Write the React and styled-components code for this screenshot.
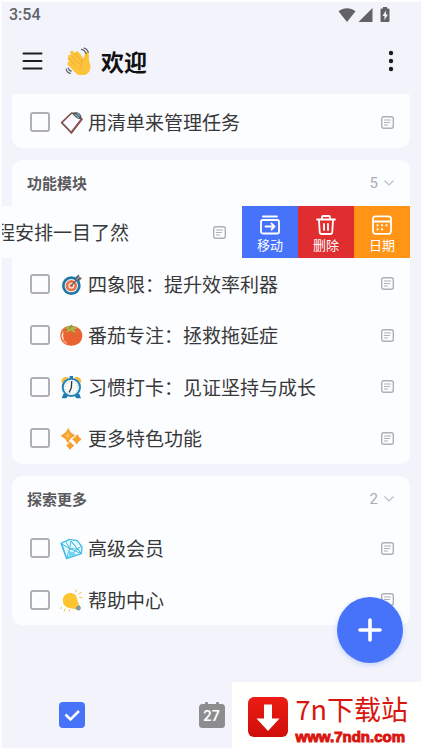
import React, { useState } from "react";
import styled, { createGlobalStyle, css } from "styled-components";

const GlobalStyle = createGlobalStyle`
  *, *::before, *::after { box-sizing: border-box; }
  html, body { margin: 0; }
  body {
    background: #fff;
    color: #38383a;
    font-family: Roboto, "Noto Sans CJK SC", sans-serif;
  }
  button { font: inherit; border: 0; padding: 0; background: none; cursor: pointer; }
  svg { display: block; flex: none; }
`;

const Screen = styled.div`
  position: relative;
  display: flex;
  flex-direction: column;
  min-height: 100vh;
  overflow: hidden;
  border: solid #fdfdff;
  border-width: 2px 0 2px 2px;
  background: #f2f3fb;
`;

const StatusBar = styled.div`
  display: flex;
  align-items: center;
  justify-content: space-between;
  height: 26px;
  padding: 0 31px 0 7px;
  color: #626266;
  font-size: 16px;
  line-height: 20px;
  font-weight: 500;
`;

const StatusIcons = styled.div`
  display: flex;
  align-items: center;
  gap: 2px;
`;

const Header = styled.header`
  display: flex;
  align-items: center;
  height: 66px;
  padding: 0 18px 0 20px;
`;

const IconButton = styled.button`
  display: grid;
  place-items: center;
  color: #1c1c1f;
`;

const Title = styled.h1`
  display: flex;
  flex: 1;
  align-items: center;
  gap: 8px;
  margin: 0 0 0 22px;
  color: #111113;
  font-family: "Noto Sans CJK SC", sans-serif;
  font-size: 23px;
  line-height: 32px;
  font-weight: 700;
`;

const Main = styled.main`
  display: flex;
  flex: 1;
  flex-direction: column;
  gap: 12px;
  padding: 0 11px 12px 10px;
`;

const Card = styled.section`
  border-radius: ${(p) => (p.$cut ? "3px 3px 10px 10px" : "10px")};
  padding-top: ${(p) => (p.$cut ? "2px" : "0")};
  background: #fcfdff;
`;

const CardHead = styled.div`
  display: flex;
  align-items: center;
  justify-content: space-between;
  height: 46px;
  padding: 0 16px 0 15px;
`;

const CardTitle = styled.h2`
  margin: 0;
  color: #5a5a5d;
  font-family: "Noto Sans CJK SC", sans-serif;
  font-size: 15px;
  line-height: 22px;
  font-weight: 700;
`;

const Fold = styled.button`
  display: flex;
  align-items: center;
  gap: 6px;
  && {
    color: #adadb0;
    font-size: 15px;
    line-height: 20px;
  }
`;

const List = styled.ul`
  margin: 0;
  padding: 0;
  list-style: none;
`;

const rowHeight = css`
  min-height: 51px;
  &:nth-child(odd) { min-height: 52px; }
`;

const Item = styled.li`
  display: flex;
  ${rowHeight}
`;

const SwipedItem = styled.li`
  display: flex;
  justify-content: flex-end;
  margin-left: -12px;
  overflow: hidden;
  background: #fcfdff;
  ${rowHeight}
`;

const Front = styled.div`
  display: flex;
  flex: ${(p) => (p.$swiped ? "0 0 calc(100% - 12px)" : "1")};
  align-items: center;
  padding: 0 16px 0 18px;
  background: ${(p) => (p.$swiped ? "#fcfdff" : "none")};
`;

const Tick = styled.input`
  appearance: none;
  flex: none;
  width: 20px;
  height: 20px;
  margin: 0 10px 0 0;
  border: 2px solid #b0b0b2;
  border-radius: 3px;
  &:checked { border-color: #4772fa; background: #4772fa; }
`;

const Label = styled.label`
  display: flex;
  flex: 1;
  align-items: center;
  gap: 4px;
  font-family: "Noto Sans CJK SC", sans-serif;
  font-size: 19px;
  line-height: 28px;
  white-space: nowrap;
`;

const Action = styled.button`
  display: flex;
  flex: none;
  flex-direction: column;
  align-items: center;
  justify-content: center;
  gap: 1px;
  width: 56px;
  && {
    padding-top: 4px;
    background: ${(p) => p.$color};
    color: #fff;
    font-size: 13px;
    line-height: 18px;
  }
`;

const TabBar = styled.nav`
  display: flex;
  align-items: center;
  height: 66px;
`;

const Tab = styled.button`
  display: flex;
  flex: 1;
  justify-content: center;
`;

const DateBadge = styled.span`
  position: relative;
  display: grid;
  place-items: center;
  width: 26px;
  height: 26px;
  color: #fff;
  font-family: Inter, sans-serif;
  font-size: 14px;
  line-height: 16px;
  svg { position: absolute; inset: 0; }
  b { position: relative; margin-top: 2px; font-weight: 600; }
`;

const AddButton = styled.button`
  position: absolute;
  right: 18px;
  bottom: 85px;
  display: grid;
  place-items: center;
  width: 66px;
  height: 66px;
  border-radius: 50%;
  && { background: #4772fa; color: #fff; }
  box-shadow: 0 2px 5px rgba(71, 114, 250, 0.25);
`;

const SiteLink = styled.a`
  position: absolute;
  right: 0;
  bottom: 0;
  display: flex;
  align-items: center;
  gap: 8px;
  height: 66px;
  padding: 4px 13px 0 16px;
  background: #fffffd;
  color: #d9150f;
  text-decoration: none;
`;

const SiteText = styled.span`
  display: flex;
  flex-direction: column;
`;

const SiteName = styled.span`
  font-family: "Noto Sans CJK SC", sans-serif;
  font-size: 27px;
  line-height: 40px;
`;

const SiteUrl = styled.span`
  font-family: "Liberation Sans", sans-serif;
  font-size: 15px;
  line-height: 16px;
  font-weight: 700;
  -webkit-text-stroke: 1px #d9150f;
`;

const Emoji = ({ size = 24, children }) => (
  <svg width={size} height={size} viewBox="0 0 72 72" aria-hidden="true">{children}</svg>
);

const Clipboard = () => (
  <Emoji>
    <path d="M35 9 5 38l29 30 31-40-10-14z" fill="#fbfbff" stroke="#80504e" strokeWidth="5" strokeLinejoin="round" />
    <path d="M34 68 65 28" stroke="#8d5552" strokeWidth="6" strokeLinecap="round" />
    <path d="M37 11c6-6 17-6 23 1 5 6 5 12 1 16-9-2-18-8-24-17z" fill="#45555e" />
    <path d="m44 13 13 11M51 9l8 10" stroke="#88a8b6" strokeWidth="4" />
  </Emoji>
);

const Target = () => (
  <Emoji>
    <circle cx="34" cy="41" r="28" fill="#1d77a8" />
    <circle cx="34" cy="41" r="20" fill="#f3f6f7" />
    <circle cx="34" cy="41" r="17" fill="#ec7045" />
    <circle cx="34" cy="41" r="9" fill="#fae8df" />
    <circle cx="34" cy="41" r="5" fill="#ec7045" />
    <path d="m34 41 22-24" stroke="#5a5960" strokeWidth="4" />
    <path d="m48 25-1-10 10-8 1 8 8 3-9 10z" fill="#63646d" />
    <path d="m50 23 10-11" stroke="#d9dce1" strokeWidth="2" />
  </Emoji>
);

const Tomato = () => (
  <Emoji>
    <path d="M34 9C13 7 0 21 1 40c1 18 15 28 33 28s32-10 33-28C68 21 54 8 34 9z" fill="#e96332" />
    <path d="M9 27c-5 14-1 27 10 33" fill="none" stroke="#f89b72" strokeWidth="5" strokeLinecap="round" />
    <path d="M28 7c-4 7-9 5-16 9 7 1 10 2 13 3-3 5-7 6-9 10 8-1 12-3 16-7 5 4 10 7 17 7-4-5-6-7-7-11 6 0 9-2 12-4-8-3-13-2-19-1z" fill="#a4b94a" />
    <path d="M29 17c0-5 3-9 8-11" fill="none" stroke="#7b983b" strokeWidth="4" />
    <path d="M8 33c-2 5-1 10 1 14" stroke="#fff1e4" strokeWidth="4" fill="none" strokeLinecap="round" />
  </Emoji>
);

const AlarmClock = () => (
  <Emoji>
    <path d="M5 23C1 12 12 3 25 7L10 24zM63 23C67 12 56 3 43 7l15 17z" fill="#f8be35" />
    <path d="M10 57 5 70h14l4-6h22l4 6h14l-5-13z" fill="#1e79b2" />
    <path d="M29 3h10v9H29z" fill="#1e79b2" />
    <circle cx="34" cy="37" r="26" fill="#f8fafa" stroke="#2884b6" strokeWidth="6" />
    <circle cx="34" cy="37" r="18" fill="none" stroke="#9baab2" strokeWidth="3" strokeDasharray="2 7.42" />
    <path d="m34 38 1-18M34 38l-6 13" stroke="#34383c" strokeWidth="4" strokeLinecap="round" />
  </Emoji>
);

const Sparkles = () => (
  <Emoji>
    <g fill="#f5a12e" stroke="#f5a12e" strokeWidth="4" strokeLinejoin="round">
      <path d="M25 9c2 10 7 15 18 20-11 4-17 9-19 20C20 39 15 34 5 29 16 24 22 19 25 9z" />
      <path d="M52 27c1 7 4 9 10 13-6 3-9 6-12 12-2-6-5-9-11-12 6-3 10-6 13-13z" />
      <path d="M31 49c1 5 4 7 9 10-5 3-7 5-10 10-2-5-4-7-9-10 5-3 8-5 10-10z" />
    </g>
    <path d="M24 19c2 6 4 8 9 11-5 2-8 4-10 9-2-5-4-7-9-10 5-2 8-5 10-10z" fill="#ffbc50" />
  </Emoji>
);

const Diamond = () => (
  <Emoji>
    <path d="m3 22 25-12 24 4 14 19-2 20-44 15z" fill="#e8f9fe" stroke="#42bde5" strokeWidth="4" strokeLinejoin="round" />
    <path d="M6 24 20 67l9-29 35 15-31-38-4 23-11-20M29 38l24 1 9-7M20 67l33-28 9 12M33 15l20 24M6 24l23 14" fill="none" stroke="#42bde5" strokeWidth="3" strokeLinejoin="round" />
    <path d="m22 42 8 22 20-9z" fill="#73d4f1" />
  </Emoji>
);

const Bulb = () => (
  <Emoji>
    <path d="M13 23c8-10 25-11 34-1 6 7 4 19 10 27L46 64c-8-4-20-3-28-8C7 49 6 33 13 23z" fill="#fac52e" />
    <path d="m57 51 5 6c2 8-3 11-9 10l-7-4z" fill="#8398a3" />
    <path d="m49 60 8-8" stroke="#697e89" strokeWidth="3" />
    <path d="m46 12 4-6M56 18l8-5M59 29h7M5 58l-3 4M16 62l-3 7M28 65v7" stroke="#f1c24e" strokeWidth="3" strokeLinecap="round" />
  </Emoji>
);

const Wave = () => (
  <Emoji size={28}>
    <path d="M9 28c-4-6 3-11 8-6l-3-5c-3-6 4-10 8-5l4 5c-2-5 5-9 9-4l13 17 3-13c1-7 9-7 10 0l1 21c9 18-1 33-15 35-12 2-19-5-25-12L8 47c-5-6 0-11 5-8l-5-6c-3-4 0-7 1-5z" fill="#fdc33b" />
    <path d="m9 29 18 20M17 22l18 20M26 16l18 22M48 30c-8 8-9 18-3 25" fill="none" stroke="#e9a63a" strokeWidth="2" strokeLinecap="round" />
    <path d="M42 6c6 1 10 5 12 11M49 3c6 1 9 5 11 11M3 57c1 6 5 10 11 11M8 54c1 4 4 7 8 8" fill="none" stroke="#60666c" strokeWidth="3" strokeLinecap="round" />
  </Emoji>
);

const NoteIcon = () => (
  <svg width="13" height="13" viewBox="0 0 13 13" fill="none" stroke="#b0b0b1" aria-hidden="true">
    <rect x="0.7" y="0.7" width="11.6" height="11.6" rx="2" strokeWidth="1.4" />
    <path d="M3 4h7M3 6.5h6M3 9h4" />
  </svg>
);

const Chevron = () => (
  <svg width="10" height="8" viewBox="0 0 10 8" fill="none" stroke="#bdbdc0" strokeWidth="1.2" aria-hidden="true">
    <path d="m0.5 1.5 4.5 4.5 4.5-4.5" />
  </svg>
);

const actionIcon = {
  width: 22, height: 22, viewBox: "0 0 22 22", fill: "none",
  stroke: "currentColor", strokeWidth: 1.8, strokeLinecap: "round", strokeLinejoin: "round",
};

const MoveIcon = () => (
  <svg {...actionIcon}>
    <path d="M4 2.5h14" />
    <rect x="2" y="6" width="18" height="13.5" rx="1.8" />
    <path d="M6.5 12.5h9M12.5 9.5l3 3-3 3" />
  </svg>
);

const TrashIcon = () => (
  <svg {...actionIcon}>
    <path d="M2 5.5h18M7 5V3.2Q7 2 8.2 2h5.6Q15 2 15 3.2V5M4 6l.7 12q.1 2 2 2h8.6q1.9 0 2-2L18 6M9 10v6M13 10v6" />
  </svg>
);

const DateIcon = () => (
  <svg {...actionIcon}>
    <rect x="2" y="2.3" width="18" height="17.5" rx="2.5" />
    <path d="M2 7.5h18" />
    <path d="M6.5 11.3h.1M11 11.3h.1M15.5 11.3h.1M6.5 15.3h.1M11 15.3h.1" strokeWidth="2.2" />
  </svg>
);

const groups = [
  { id: "intro", items: [{ icon: Clipboard, text: "用清单来管理任务" }] },
  {
    id: "features",
    title: "功能模块",
    items: [
      { text: "日历：日程安排一目了然", swiped: true },
      { icon: Target, text: "四象限：提升效率利器" },
      { icon: Tomato, text: "番茄专注：拯救拖延症" },
      { icon: AlarmClock, text: "习惯打卡：见证坚持与成长" },
      { icon: Sparkles, text: "更多特色功能" },
    ],
  },
  {
    id: "explore",
    title: "探索更多",
    items: [
      { icon: Diamond, text: "高级会员" },
      { icon: Bulb, text: "帮助中心" },
    ],
  },
];

function TaskRow({ id, item }) {
  const Icon = item.icon;
  const Wrap = item.swiped ? SwipedItem : Item;
  return (
    <Wrap>
      <Front $swiped={item.swiped}>
        <Tick type="checkbox" id={id} />
        <Label htmlFor={id}>
          {Icon ? <Icon /> : <Emoji />}
          {item.text}
        </Label>
        <NoteIcon />
      </Front>
      {item.swiped && (
        <>
          <Action $color="#4772fa"><MoveIcon />移动</Action>
          <Action $color="#df2d30"><TrashIcon />删除</Action>
          <Action $color="#ff9417"><DateIcon />日期</Action>
        </>
      )}
    </Wrap>
  );
}

function Group({ group }) {
  const [open, setOpen] = useState(true);
  return (
    <Card $cut={!group.title}>
      {group.title && (
        <CardHead>
          <CardTitle>{group.title}</CardTitle>
          <Fold aria-expanded={open} onClick={() => setOpen(!open)}>
            {group.items.length}
            <Chevron />
          </Fold>
        </CardHead>
      )}
      {open && (
        <List>
          {group.items.map((item, i) => (
            <TaskRow key={item.text} id={`${group.id}-${i}`} item={item} />
          ))}
        </List>
      )}
    </Card>
  );
}

export default function App() {
  return (
    <>
      <GlobalStyle />
      <Screen>
        <StatusBar>
          <span>3:54</span>
          <StatusIcons>
            <svg width="18" height="16" viewBox="0 0 18 16" fill="currentColor">
              <path d="M0.5 4.3C5.5 0.2 12.5 0.2 17.5 4.3L9 15z" />
            </svg>
            <svg width="15" height="16" viewBox="0 0 15 16" fill="currentColor">
              <path d="M14.5 1v14H0.5z" />
            </svg>
            <svg width="15" height="16" viewBox="1 0 15 16" fill="currentColor">
              <path fillRule="evenodd" d="M9 0h4v1.5h1.500q1 0 1 1V14q0 1-1 1h-7q-1 0-1-1V2.500q0-1 1-1H9zM12 3.500 8.500 9h2v4L14 7.500h-2z" />
            </svg>
          </StatusIcons>
        </StatusBar>
        <Header>
          <IconButton aria-label="菜单">
            <svg width="21" height="20" viewBox="0 0 21 20" stroke="currentColor" strokeWidth="2" strokeLinecap="round">
              <path d="M1.500 2.500h18M1.500 10h18M1.500 17.500h18" />
            </svg>
          </IconButton>
          <Title><Wave />欢迎</Title>
          <IconButton aria-label="更多">
            <svg width="24" height="24" viewBox="0 0 24 24" fill="currentColor">
              <circle cx="12" cy="4" r="2.200" />
              <circle cx="12" cy="12" r="2.200" />
              <circle cx="12" cy="20" r="2.200" />
            </svg>
          </IconButton>
        </Header>
        <Main>
          {groups.map((g) => <Group key={g.id} group={g} />)}
        </Main>
        <TabBar>
          <Tab aria-label="任务">
            <svg width="26" height="26" viewBox="0 0 26 26" fill="none">
              <rect width="26" height="26" rx="4" fill="#4772fa" />
              <path d="m6.500 12.500 5 5 8.500-8.500" stroke="#fff" strokeWidth="2.600" />
            </svg>
          </Tab>
          <Tab aria-label="日历">
            <DateBadge>
              <svg width="26" height="26" viewBox="0 0 26 26" fill="#8d8d90">
                <rect y="2" width="26" height="24" rx="3.500" />
                <rect x="6" width="3" height="5" rx="1" />
                <rect x="17" width="3" height="5" rx="1" />
              </svg>
              <b>27</b>
            </DateBadge>
          </Tab>
          <Tab aria-label="设置" />
        </TabBar>
        <AddButton aria-label="添加任务">
          <svg width="24" height="24" viewBox="0 0 24 24" stroke="currentColor" strokeWidth="3.600" strokeLinecap="round">
            <path d="M12 2v20M2 12h20" />
          </svg>
        </AddButton>
        <SiteLink href="#site">
          <svg width="40" height="40" viewBox="0 0 40 40">
            <defs>
              <linearGradient id="siteRed" x1="0" y1="0" x2="0" y2="1">
                <stop offset="0" stopColor="#ec1c12" />
                <stop offset="1" stopColor="#cf0f0b" />
              </linearGradient>
            </defs>
            <rect width="40" height="40" rx="6" fill="url(#siteRed)" />
            <path d="M16 7.500h8v14h7.500L20 34 8.500 21.500H16z" fill="#fff" />
          </svg>
          <SiteText>
            <SiteName>7n下载站</SiteName>
            <SiteUrl>www.7ndn.com</SiteUrl>
          </SiteText>
        </SiteLink>
      </Screen>
    </>
  );
}
